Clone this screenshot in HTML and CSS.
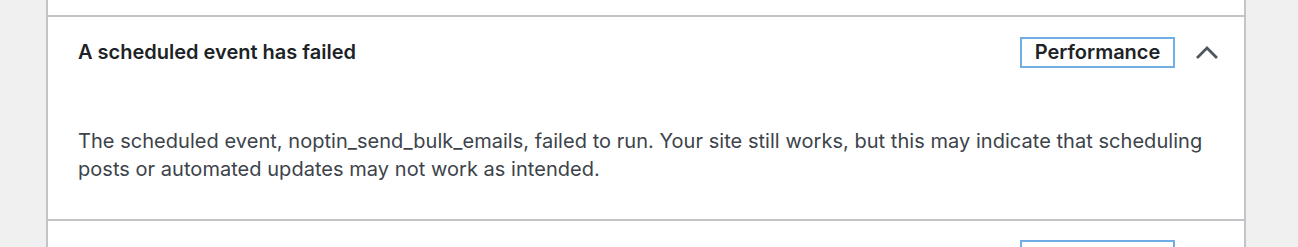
FILE: index.html
```html
<!DOCTYPE html>
<html lang="en">
<head>
<meta charset="utf-8">
<title>Site Health</title>
<link rel="stylesheet" href="styles.css">
</head>
<body>
<div class="accordion">
  <div class="item item-prev"></div>
  <div class="item">
    <div class="trigger">
      <span class="title">A scheduled event has failed</span>
      <span class="badge">Performance</span>
      <svg class="chevron" width="22" height="14" viewBox="0 0 22 14" aria-hidden="true">
        <polyline points="2,12 11,3 20,12" fill="none" stroke="#50575e" stroke-width="2.8" stroke-linecap="square"/>
      </svg>
    </div>
    <div class="panel">
      <p>The scheduled event, noptin_send_bulk_emails, failed to run. Your site still works, but this may indicate that scheduling posts or automated updates may not work as intended.</p>
    </div>
  </div>
  <div class="item item-next">
    <div class="trigger">
      <span class="title"></span>
      <span class="badge">Performance</span>
      <span class="chevron-space"></span>
    </div>
  </div>
</div>
</body>
</html>
```
FILE: styles.css
```css
html, body {
  margin: 0;
  padding: 0;
  background: #f0f0f1;
  font-family: Inter, "Noto Sans", sans-serif;
  color: #1d2327;
}
.accordion {
  margin-left: 46px;
  width: 1196px;
  background: #fff;
  border-left: 2px solid #c3c4c7;
  border-right: 2px solid #c3c4c7;
  height: 247px;
  overflow: hidden;
}
.item {
  border-bottom: 2px solid #c3c4c7;
}
.item-prev {
  height: 15px;
}
.trigger {
  display: flex;
  align-items: center;
  height: 70px;
  padding: 0 26px 0 30px;
}
.title {
  flex: 1;
  font-size: 20px;
  font-weight: 600;
  color: #1d2327;
}
.badge {
  box-sizing: border-box;
  height: 31px;
  width: 155px;
  border: 2px solid #72aee6;
  display: flex;
  align-items: center;
  justify-content: center;
  font-size: 20px;
  font-weight: 600;
  color: #1d2327;
}
.chevron {
  margin-left: 21px;
  display: block;
}
.chevron-space {
  width: 22px;
  margin-left: 21px;
}
.panel {
  padding: 40px 6px 36px 30px;
}
.panel p {
  margin: 0;
  font-size: 20px;
  line-height: 28px;
  letter-spacing: 0.04px;
  color: #3c434a;
}
.item-next .trigger {
  padding-top: 19px;
  align-items: flex-start;
}
```
